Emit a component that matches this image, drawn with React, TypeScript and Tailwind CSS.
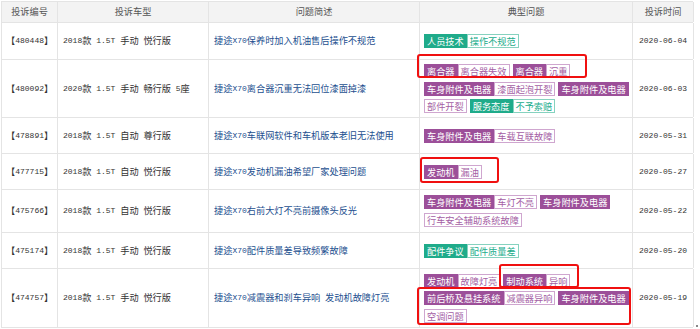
import React from "react";

type Part = { t: string; k: "f" | "o" };
type Group = { c: "p" | "g"; parts: Part[] };
type Row = {
  id: string;
  model: string;
  desc: string;
  date: string;
  h: string;
  lines: Group[][];
};

const rows: Row[] = [
  {
    id: "480448",
    model: "2018款 1.5T 手动 悦行版",
    desc: "捷途X70保养时加入机油售后操作不规范",
    date: "2020-06-04",
    h: "h-[37px]",
    lines: [[{ c: "g", parts: [{ t: "人员技术", k: "f" }, { t: "操作不规范", k: "o" }] }]],
  },
  {
    id: "480092",
    model: "2020款 1.5T 手动 畅行版 5座",
    desc: "捷途X70离合器沉重无法回位漆面掉漆",
    date: "2020-06-03",
    h: "h-[58px]",
    lines: [
      [
        { c: "p", parts: [{ t: "离合器", k: "f" }, { t: "离合器失效", k: "o" }] },
        { c: "p", parts: [{ t: "离合器", k: "f" }, { t: "沉重", k: "o" }] },
      ],
      [
        { c: "p", parts: [{ t: "车身附件及电器", k: "f" }, { t: "漆面起泡开裂", k: "o" }] },
        { c: "p", parts: [{ t: "车身附件及电器", k: "f" }] },
      ],
      [
        { c: "p", parts: [{ t: "部件开裂", k: "o" }] },
        { c: "g", parts: [{ t: "服务态度", k: "f" }, { t: "不予索赔", k: "o" }] },
      ],
    ],
  },
  {
    id: "478891",
    model: "2018款 1.5T 自动 尊行版",
    desc: "捷途X70车联网软件和车机版本老旧无法使用",
    date: "2020-05-31",
    h: "h-[36px]",
    lines: [[{ c: "p", parts: [{ t: "车身附件及电器", k: "f" }, { t: "车载互联故障", k: "o" }] }]],
  },
  {
    id: "477715",
    model: "2018款 1.5T 自动 悦行版",
    desc: "捷途X70发动机漏油希望厂家处理问题",
    date: "2020-05-27",
    h: "h-[36px]",
    lines: [[{ c: "p", parts: [{ t: "发动机", k: "f" }, { t: "漏油", k: "o" }] }]],
  },
  {
    id: "475766",
    model: "2018款 1.5T 自动 悦行版",
    desc: "捷途X70右前大灯不亮前摄像头反光",
    date: "2020-05-22",
    h: "h-[43px]",
    lines: [
      [
        { c: "p", parts: [{ t: "车身附件及电器", k: "f" }, { t: "车灯不亮", k: "o" }] },
        { c: "p", parts: [{ t: "车身附件及电器", k: "f" }] },
      ],
      [{ c: "p", parts: [{ t: "行车安全辅助系统故障", k: "o" }] }],
    ],
  },
  {
    id: "475174",
    model: "2018款 1.5T 手动 悦行版",
    desc: "捷途X70配件质量差导致频繁故障",
    date: "2020-05-20",
    h: "h-[36px]",
    lines: [[{ c: "g", parts: [{ t: "配件争议", k: "f" }, { t: "配件质量差", k: "o" }] }]],
  },
  {
    id: "474757",
    model: "2018款 1.5T 手动 悦行版",
    desc: "捷途X70减震器和刹车异响 发动机故障灯亮",
    date: "2020-05-19",
    h: "h-[59px]",
    lines: [
      [
        { c: "p", parts: [{ t: "发动机", k: "f" }, { t: "故障灯亮", k: "o" }] },
        { c: "p", parts: [{ t: "制动系统", k: "f" }, { t: "异响", k: "o" }] },
      ],
      [
        { c: "p", parts: [{ t: "前后桥及悬挂系统", k: "f" }, { t: "减震器异响", k: "o" }] },
        { c: "p", parts: [{ t: "车身附件及电器", k: "f" }] },
      ],
      [{ c: "p", parts: [{ t: "空调问题", k: "o" }] }],
    ],
  },
];

function Mix({ text }: { text: string }) {
  const parts = text.split(/([\x00-\x7F]+)/).filter((s) => s.length > 0);
  return (
    <>
      {parts.map((p, i) =>
        /^[\x00-\x7F]+$/.test(p) ? (
          <span key={i} className="font-['Liberation_Mono',monospace] text-[8px] whitespace-pre">
            {p}
          </span>
        ) : (
          <span key={i}>{p}</span>
        )
      )}
    </>
  );
}

function Tag({ part, c }: { part: Part; c: "p" | "g" }) {
  let cls = "";
  if (c === "p") {
    cls =
      part.k === "f"
        ? "bg-[#9c4f99] border-[#9c4f99] text-white"
        : "bg-white border-[#cfa6cf] text-[#a45ea4]";
  } else {
    cls =
      part.k === "f"
        ? "bg-[#1fab8a] border-[#1fab8a] text-white"
        : "bg-white border-[#86d2bf] text-[#22ad8c]";
  }
  return (
    <span className={"h-[14px] border px-[2px] leading-[12px] text-[9.2px] whitespace-nowrap " + cls}>
      {part.t}
    </span>
  );
}

const cell = "border-r border-[#e4e4e4] flex items-center";

export default function App() {
  return (
    <div className="relative w-[700px] h-[329px] bg-white overflow-hidden font-['Noto_Sans_CJK_SC',sans-serif]">
      <div className="ml-[1px] mt-[1px] w-[692px] border-l border-t border-[#e4e4e4]">
        <div className="grid grid-cols-[56px_151px_211px_213px_61px] h-[21px] bg-[#f3f3f3] border-b border-[#e4e4e4] text-[9.2px] text-[#555]">
          <div className={cell + " justify-center"}>投诉编号</div>
          <div className={cell + " justify-center"}>投诉车型</div>
          <div className={cell + " justify-center"}>问题简述</div>
          <div className={cell + " justify-center"}>典型问题</div>
          <div className={cell + " justify-center"}>投诉时间</div>
        </div>
        {rows.map((r) => (
          <div
            key={r.id}
            className={"grid grid-cols-[56px_151px_211px_213px_61px] border-b border-[#e4e4e4] text-[9.2px] " + r.h}
          >
            <div className={cell + " pl-[4px] text-[#333] whitespace-nowrap"}>
              <span>【</span>
              <span className="font-['Liberation_Mono',monospace] text-[8px]">{r.id}</span>
              <span>】</span>
            </div>
            <div className={cell + " pl-[5px] text-[#333] whitespace-nowrap"}>
              <Mix text={r.model} />
            </div>
            <div className={cell + " pl-[5px] text-[#24508f] whitespace-nowrap"}>
              <Mix text={r.desc} />
            </div>
            <div className={cell + " pl-[4px]"}>
              <div className="flex flex-col gap-[3.5px]">
                {r.lines.map((line, li) => (
                  <div key={li} className="flex gap-[3px]">
                    {line.map((g, gi) => (
                      <div key={gi} className="flex">
                        {g.parts.map((p, pi) => (
                          <Tag key={pi} part={p} c={g.c} />
                        ))}
                      </div>
                    ))}
                  </div>
                ))}
              </div>
            </div>
            <div className={cell + " justify-center text-[#333]"}>
              <span className="font-['Liberation_Mono',monospace] text-[8px]">{r.date}</span>
            </div>
          </div>
        ))}
      </div>

      <div className="absolute left-[417px] top-[54px] w-[170px] h-[24px] border-2 border-[#f01010] rounded-[3px]" />
      <div className="absolute left-[420px] top-[157px] w-[79px] h-[26px] border-2 border-[#f01010] rounded-[3px]" />
      <div className="absolute left-[499px] top-[264px] w-[80px] h-[24px] border-2 border-[#f01010] rounded-[3px]" />
      <div className="absolute left-[417px] top-[287px] w-[214px] h-[38px] border-2 border-[#f01010] rounded-[3px]" />
      <div className="absolute left-[696px] top-[325px] w-[2px] h-[2px] bg-[#888]" />
    </div>
  );
}
